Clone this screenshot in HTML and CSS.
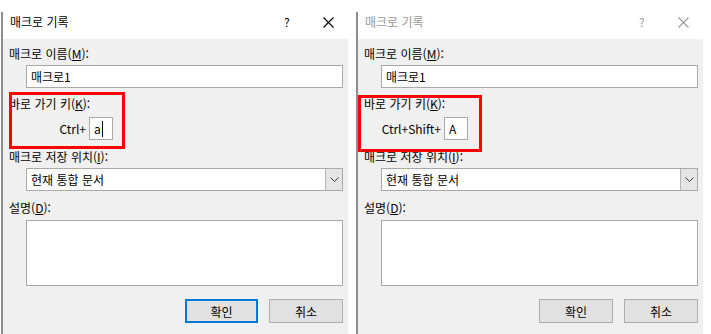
FILE: index.html
```html
<!DOCTYPE html>
<html lang="ko">

<head>
    <meta charset="UTF-8">
    <title>매크로 기록</title>
    <link rel="stylesheet" href="styles.css">
</head>

<body>
    <div class="pair">
        <!-- 활성 창: Ctrl+ -->
        <div class="dialog">
            <div class="titlebar">
                <span class="title">매크로 기록</span>
                <span class="help">?</span>
                <svg class="close" width="11" height="11" viewBox="0 0 11 11">
                    <path d="M0.5 0.5 L10.5 10.5 M10.5 0.5 L0.5 10.5" stroke="currentColor" stroke-width="1.1" fill="none" />
                </svg>
            </div>
            <div class="body">
                <p class="label">매크로 이름(<u>M</u>):</p>
                <div class="field">매크로1</div>
                <p class="label gap8">바로 가기 키(<u>K</u>):</p>
                <div class="keyrow">
                    <span class="mod">Ctrl+</span>
                    <span class="key">a<i class="caret"></i></span>
                </div>
                <p class="label gap9">매크로 저장 위치(<u>I</u>):</p>
                <div class="select">
                    <span class="value">현재 통합 문서</span>
                    <span class="arrow">
                        <svg width="9" height="5" viewBox="0 0 9 5">
                            <path d="M0.5 0.5 L4.5 4.5 L8.5 0.5" stroke="#404040" stroke-width="1" fill="none" />
                        </svg>
                    </span>
                </div>
                <p class="label gap9">설명(<u>D</u>):</p>
                <div class="memo"></div>
                <div class="buttons">
                    <button class="btn default">확인</button>
                    <button class="btn">취소</button>
                </div>
            </div>
            <div class="mark mark-left"></div>
        </div>

        <!-- 비활성 창: Ctrl+Shift+ -->
        <div class="dialog inactive">
            <div class="titlebar">
                <span class="title">매크로 기록</span>
                <span class="help">?</span>
                <svg class="close" width="11" height="11" viewBox="0 0 11 11">
                    <path d="M0.5 0.5 L10.5 10.5 M10.5 0.5 L0.5 10.5" stroke="currentColor" stroke-width="1.1" fill="none" />
                </svg>
            </div>
            <div class="body">
                <p class="label">매크로 이름(<u>M</u>):</p>
                <div class="field">매크로1</div>
                <p class="label gap8">바로 가기 키(<u>K</u>):</p>
                <div class="keyrow">
                    <span class="mod">Ctrl+Shift+</span>
                    <span class="key">A</span>
                </div>
                <p class="label gap9">매크로 저장 위치(<u>I</u>):</p>
                <div class="select">
                    <span class="value">현재 통합 문서</span>
                    <span class="arrow">
                        <svg width="9" height="5" viewBox="0 0 9 5">
                            <path d="M0.5 0.5 L4.5 4.5 L8.5 0.5" stroke="#404040" stroke-width="1" fill="none" />
                        </svg>
                    </span>
                </div>
                <p class="label gap9">설명(<u>D</u>):</p>
                <div class="memo"></div>
                <div class="buttons">
                    <button class="btn">확인</button>
                    <button class="btn">취소</button>
                </div>
            </div>
            <div class="mark mark-right"></div>
        </div>
    </div>
</body>

</html>
```

FILE: styles.css
```css
* {
    margin: 0;
    padding: 0;
    box-sizing: border-box;
}

body {
    background-color: #fff;
    font-family: "Noto Sans CJK KR", "Noto Sans", sans-serif;
    font-size: 12px;
    color: #000;
    padding-left: 1px;
}

.pair {
    display: flex;
    gap: 8px;
    padding-top: 12px;
}

.dialog {
    width: 347px;
    height: 322px;
    border-left: 2px solid #8e8e8e;
    position: relative;
    overflow: hidden;
}

/* 제목 표시줄 */
.titlebar {
    height: 27px;
    display: flex;
    align-items: flex-start;
    padding-top: 2px;
    background-color: #fff;
    line-height: 16px;
}

.title {
    padding-left: 7px;
    flex: 1;
}

.help {
    width: 10px;
    margin-right: 29px;
}

.close {
    margin-top: 3px;
    margin-right: 14px;
}

.inactive .titlebar {
    color: #999;
}

/* 본문 */
.body {
    height: 295px;
    background-color: #f0f0f0;
    padding: 7px 5px 0 6px;
}

.label {
    line-height: 16px;
    height: 16px;
}

.gap8 {
    margin-top: 8px;
}

.gap9 {
    margin-top: 9px;
}

.field,
.select,
.memo {
    margin-left: 17px;
    background-color: #fff;
    border: 1px solid #a9a9a9;
}

.field {
    margin-top: 3px;
    height: 23px;
    line-height: 21px;
    padding-left: 4px;
}

.keyrow {
    margin-top: 5px;
    display: flex;
    align-items: center;
    height: 23px;
}

.mod {
    width: 80px;
    text-align: right;
    padding-right: 3px;
}

.key {
    width: 24px;
    height: 23px;
    line-height: 21px;
    background-color: #fff;
    border: 1px solid #a9a9a9;
    padding-left: 4px;
    display: flex;
    align-items: center;
}

.caret {
    display: inline-block;
    width: 1px;
    height: 16px;
    background-color: #000;
    margin-left: 1px;
}

.select {
    margin-top: 3px;
    height: 23px;
    display: flex;
}

.select .value {
    flex: 1;
    line-height: 21px;
    padding-left: 4px;
}

.select .arrow {
    width: 17px;
    background-color: #e5e5e5;
    border-left: 1px solid #b5b5b5;
    display: flex;
    align-items: center;
    justify-content: center;
}

.memo {
    margin-top: 4px;
    height: 66px;
}

.buttons {
    margin-top: 13px;
    display: flex;
    justify-content: flex-end;
    gap: 11px;
}

.btn {
    width: 74px;
    height: 24px;
    font-family: inherit;
    font-size: 12px;
    background-color: #e1e1e1;
    border: 1px solid #adadad;
    color: #000;
}

.btn.default {
    width: 73px;
    border: 2px solid #0078d7;
}

/* 빨간 표시 상자 */
.mark {
    position: absolute;
    border: 3px solid #f00;
    height: 57px;
}

.mark-left {
    left: 6px;
    top: 80px;
    width: 116px;
}

.mark-right {
    left: 0;
    top: 83px;
    width: 124px;
}
```
